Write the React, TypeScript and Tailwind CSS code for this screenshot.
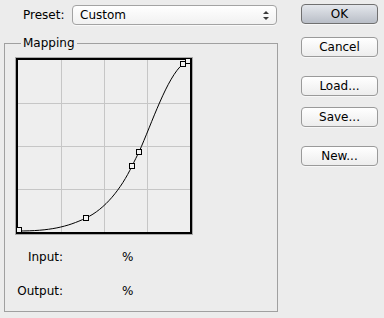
import React from "react";

// curve control points, graph coordinates
const points: [number, number][] = [
   [4, 173],
   [71, 161],
   [117, 109],
   [124, 95],
   [168, 7],
   [173, 4],
];

const CurveGraph: React.FC = () => {
   const grid = [46.5, 89.5, 132.5];
   return (
      <svg width="178" height="178" viewBox="0 0 178 178" className="block">
         <rect x="0.5" y="0.5" width="177" height="177" fill="#eeeeee" stroke="#a9a9a9" />
         {grid.map((g) => (
            <g key={g}>
               <line x1={g} y1="3" x2={g} y2="175" stroke="#c6c6c6" />
               <line x1="3" y1={g} x2="175" y2={g} stroke="#c6c6c6" />
            </g>
         ))}
         <rect x="2" y="2" width="174" height="174" fill="none" stroke="#000" strokeWidth="2" />
         <path
            d="M3,174 C35,174 52,170 71,161 C90,152 106,132 117,109 C119.5,104 122,99 124,95 C137,66 152,20 168,7 L173,4"
            fill="none"
            stroke="#000"
            strokeWidth="1"
         />
         {points.map(([x, y], i) => (
            <rect
               key={i}
               x={Math.round(x) - 2.5}
               y={Math.round(y) - 2.5}
               width="5"
               height="5"
               fill="#f2f2f2"
               stroke="#000"
               strokeWidth="1"
            />
         ))}
      </svg>
   );
};

const Button: React.FC<{ label: string; primary?: boolean; className?: string }> = ({
   label,
   primary,
   className,
}) => (
   <button
      className={
         primary
            ? `h-[20px] w-[77px] rounded-[4px] border border-[#707070] bg-linear-to-b from-[#e4e7ec] to-[#b9bec7] text-[12px] leading-none text-black shadow-[0_1px_0_rgba(255,255,255,0.6)] ${className ?? ""}`
            : `h-[20px] w-[77px] rounded-[4px] border border-[#9a9a9a] bg-linear-to-b from-white to-[#ededed] text-[12px] leading-none text-black shadow-[0_1px_0_rgba(255,255,255,0.6)] ${className ?? ""}`
      }
   >
      {label}
   </button>
);

const App: React.FC = () => {
   return (
      <div className="flex h-[318px] w-[384px] bg-[#ececec] font-['DejaVu_Sans',sans-serif] text-[12px] text-black">
         {/* left column */}
         <div className="flex w-[277px] flex-col pl-[4px]">
            <div className="mt-[5px] flex h-[20px] items-center">
               <span className="ml-[19px] w-[49px] leading-none">Preset:</span>
               <div className="flex h-[20px] w-[205px] items-center justify-between rounded-[4px] border border-[#a3a3a3] bg-linear-to-b from-white to-[#f1f1f1] pl-[7px] pr-[7px] shadow-[0_1px_0_rgba(255,255,255,0.7)]">
                  <span className="leading-none">Custom</span>
                  <span className="flex flex-col items-center gap-[3px]">
                     <span className="h-0 w-0 border-x-[3px] border-b-[3px] border-x-transparent border-b-[#3a3a3a]" />
                     <span className="h-0 w-0 border-x-[3px] border-t-[3px] border-x-transparent border-t-[#3a3a3a]" />
                  </span>
               </div>
            </div>

            <fieldset className="mt-[10px] h-[277px] w-[274px] border border-[#a0a0a0]">
               <legend className="ml-[16px] px-[2px] leading-[16px]">Mapping</legend>
               <div className="ml-[10px] mt-[6px]">
                  <CurveGraph />
               </div>
               <div className="mt-[14px] flex leading-[16px]">
                  <span className="w-[58px] text-right">Input:</span>
                  <span className="ml-[59px]">%</span>
               </div>
               <div className="mt-[18px] flex leading-[16px]">
                  <span className="w-[58px] text-right">Output:</span>
                  <span className="ml-[59px]">%</span>
               </div>
            </fieldset>
         </div>

         {/* right column */}
         <div className="ml-[24px] flex flex-col pt-[4px]">
            <Button label="OK" primary />
            <Button label="Cancel" className="mt-[13px]" />
            <Button label="Load..." className="mt-[19px]" />
            <Button label="Save..." className="mt-[11px]" />
            <Button label="New..." className="mt-[19px]" />
         </div>
      </div>
   );
};

export default App;
